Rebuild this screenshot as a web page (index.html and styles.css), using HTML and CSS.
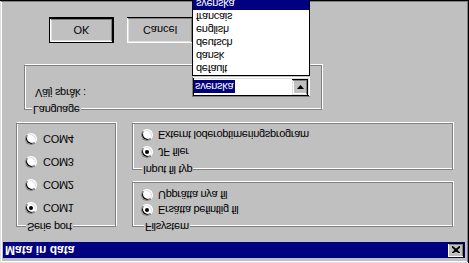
FILE: index.html
```html
<!DOCTYPE html>
<html lang="sv">
  <head>
    <meta charset="UTF-8" />
    <meta name="viewport" content="width=device-width, initial-scale=1.0" />
    <title>Mata in data</title>
    <link rel="stylesheet" href="styles.css">
  </head>
  <body>
    <div class="window">
      <div class="titleBar">
        <span class="titleText">Mata in data</span>
        <button class="closeButton">
          <svg width="8" height="7" viewBox="0 0 8 7">
            <path d="M0 0 L8 7 M8 0 L0 7 M1 0 L8 6 M7 0 L0 6" stroke="#000" stroke-width="1.2" fill="none" />
          </svg>
        </button>
      </div>

      <div class="topRow">
        <div class="groupBox seriePort">
          <div class="groupLabel">Serie port</div>
          <div class="comRow"><span class="radio checked"></span>COM1</div>
          <div class="comRow"><span class="radio"></span>COM2</div>
          <div class="comRow"><span class="radio"></span>COM3</div>
          <div class="comRow"><span class="radio"></span>COM4</div>
        </div>

        <div class="rightColumn">
          <div class="groupBox fileSystem">
            <div class="groupLabel labelFile">Filsystem</div>
            <div class="radioList">
              <div class="optionRow"><span class="radio checked"></span>Ersätta befintlig fil</div>
              <div class="optionRow"><span class="radio"></span>Upprätta nya fil</div>
            </div>
          </div>

          <div class="groupBox inputType">
            <div class="groupLabel">Input fil typ</div>
            <div class="radioList">
              <div class="optionRow tallRow"><span class="radio checked"></span>JF filer</div>
              <div class="optionRow tallRow"><span class="radio"></span>Externt loderoptimeringsprogram</div>
            </div>
          </div>
        </div>
      </div>

      <div class="groupBox language">
        <div class="groupLabel labelLanguage">Language</div>
        <div class="languageRow">
          <span class="languageText">Välj språk :</span>
          <div class="comboBox">
            <div class="comboField"><span class="comboValue">svenska</span></div>
            <span class="comboButton">
              <svg width="7" height="4" viewBox="0 0 7 4"><path d="M0 0 H7 L3.5 4 Z" fill="#000" /></svg>
            </span>
          </div>
        </div>
      </div>

      <div class="buttonRow">
        <button class="dialogButton defaultButton">OK</button>
        <button class="dialogButton cancelButton">Cancel</button>
      </div>

      <ul class="dropList">
        <li>default</li>
        <li>dansk</li>
        <li>deutsch</li>
        <li>english</li>
        <li>francais</li>
        <li class="selected">svenska</li>
      </ul>
    </div>
  </body>
</html>
```

FILE: styles.css
```css
body {
  margin: 0;
  background-color: #c0c0c0;
  font-family: "Liberation Sans", Arial, sans-serif;
  font-size: 11px;
  letter-spacing: -0.3px;
  color: #000;
}

/* the screenshot is mirrored top to bottom */
.window {
  position: relative;
  width: 469px;
  height: 263px;
  box-sizing: border-box;
  padding: 5px 4px 0 3px;
  background-color: #c0c0c0;
  overflow: hidden;
  box-shadow: inset -1px -1px 0 #000, inset 1px 1px 0 #dfdfdf,
    inset -2px -2px 0 #808080, inset 2px 2px 0 #fff;
  transform: scaleY(-1);
}

.titleBar {
  height: 16px;
  display: flex;
  align-items: center;
  justify-content: space-between;
  padding-left: 2px;
  background-color: #000080;
}

.titleText {
  color: #fff;
  font-weight: bold;
  font-size: 12px;
  letter-spacing: 0;
}

.closeButton {
  width: 16px;
  height: 14px;
  margin-right: 1px;
  padding: 0;
  border: none;
  background-color: #c0c0c0;
  display: flex;
  align-items: center;
  justify-content: center;
  box-shadow: inset -1px -1px 0 #000, inset 1px 1px 0 #fff,
    inset -2px -2px 0 #808080;
}

.topRow {
  display: flex;
  margin-top: 15px;
}

.groupBox {
  box-sizing: border-box;
  border: 1px solid #808080;
  box-shadow: inset 1px 1px 0 #fff, 1px 1px 0 #fff;
}

.groupLabel {
  width: fit-content;
  height: 13px;
  line-height: 13px;
  margin: -7px 0 0 1px;
  padding: 0 1px;
  background-color: #c0c0c0;
}

.labelFile {
  margin-left: 3px;
}

.labelLanguage {
  margin-left: 7px;
}

.seriePort {
  width: 100px;
  height: 104px;
  margin-left: 13px;
  padding-left: 8px;
}

.comRow {
  height: 23px;
  display: flex;
  align-items: center;
  gap: 6px;
}

.rightColumn {
  margin-left: 16px;
  width: 321px;
  display: flex;
  flex-direction: column;
  gap: 12px;
}

.fileSystem {
  height: 45px;
  padding-left: 8px;
}

.inputType {
  height: 47px;
  padding-left: 8px;
}

.radioList {
  margin-top: 2px;
}

.optionRow {
  height: 15px;
  display: flex;
  align-items: center;
  gap: 5px;
}

.tallRow {
  height: 17px;
}

.radio {
  width: 12px;
  height: 12px;
  box-sizing: border-box;
  flex-shrink: 0;
  border-radius: 50%;
  background-color: #fff;
  border: 1px solid;
  border-color: #808080 #fff #fff #808080;
  box-shadow: inset 1px 1px 0 #000, inset -1px -1px 0 #dfdfdf;
  display: flex;
  align-items: center;
  justify-content: center;
}

.checked::after {
  content: "";
  width: 4px;
  height: 4px;
  border-radius: 50%;
  background-color: #000;
}

.language {
  width: 298px;
  height: 45px;
  margin: 13px 0 0 21px;
}

.languageRow {
  display: flex;
  align-items: flex-start;
  padding-left: 10px;
}

.languageText {
  width: 157px;
  margin-top: 4px;
  line-height: 13px;
}

.comboBox {
  width: 118px;
  height: 20px;
  margin-top: 6px;
  box-sizing: border-box;
  display: flex;
  align-items: center;
  justify-content: space-between;
  padding: 2px;
  background-color: #fff;
  box-shadow: inset 1px 1px 0 #808080, inset -1px -1px 0 #fff,
    inset 2px 2px 0 #000, inset -2px -2px 0 #dfdfdf;
}

.comboValue {
  display: inline-block;
  height: 13px;
  line-height: 13px;
  padding: 0 2px 0 1px;
  background-color: #000080;
  color: #fff;
}

.comboButton {
  width: 16px;
  height: 16px;
  box-sizing: border-box;
  background-color: #c0c0c0;
  display: flex;
  align-items: center;
  justify-content: center;
  box-shadow: inset -1px -1px 0 #000, inset 1px 1px 0 #dfdfdf,
    inset -2px -2px 0 #808080, inset 2px 2px 0 #fff;
}

.buttonRow {
  display: flex;
  gap: 13px;
  margin: 22px 0 0 46px;
}

.dialogButton {
  width: 66px;
  height: 26px;
  box-sizing: border-box;
  padding: 0;
  border: none;
  background-color: #c0c0c0;
  font-family: "Liberation Sans", Arial, sans-serif;
  font-size: 11px;
  color: #000;
  box-shadow: inset -1px -1px 0 #000, inset 1px 1px 0 #fff,
    inset -2px -2px 0 #808080, inset 2px 2px 0 #dfdfdf;
}

.defaultButton {
  width: 65px;
  border: 1px solid #000;
}

/* open list of the language combo, drawn over the dialog */
.dropList {
  position: absolute;
  left: 192px;
  top: 187px;
  width: 118px;
  height: 80px;
  box-sizing: border-box;
  margin: 0;
  padding: 0;
  list-style: none;
  border: 1px solid #000;
  background-color: #fff;
}

.dropList li {
  height: 13px;
  line-height: 13px;
  padding-left: 3px;
}

.dropList .selected {
  background-color: #000080;
  color: #fff;
}
```
